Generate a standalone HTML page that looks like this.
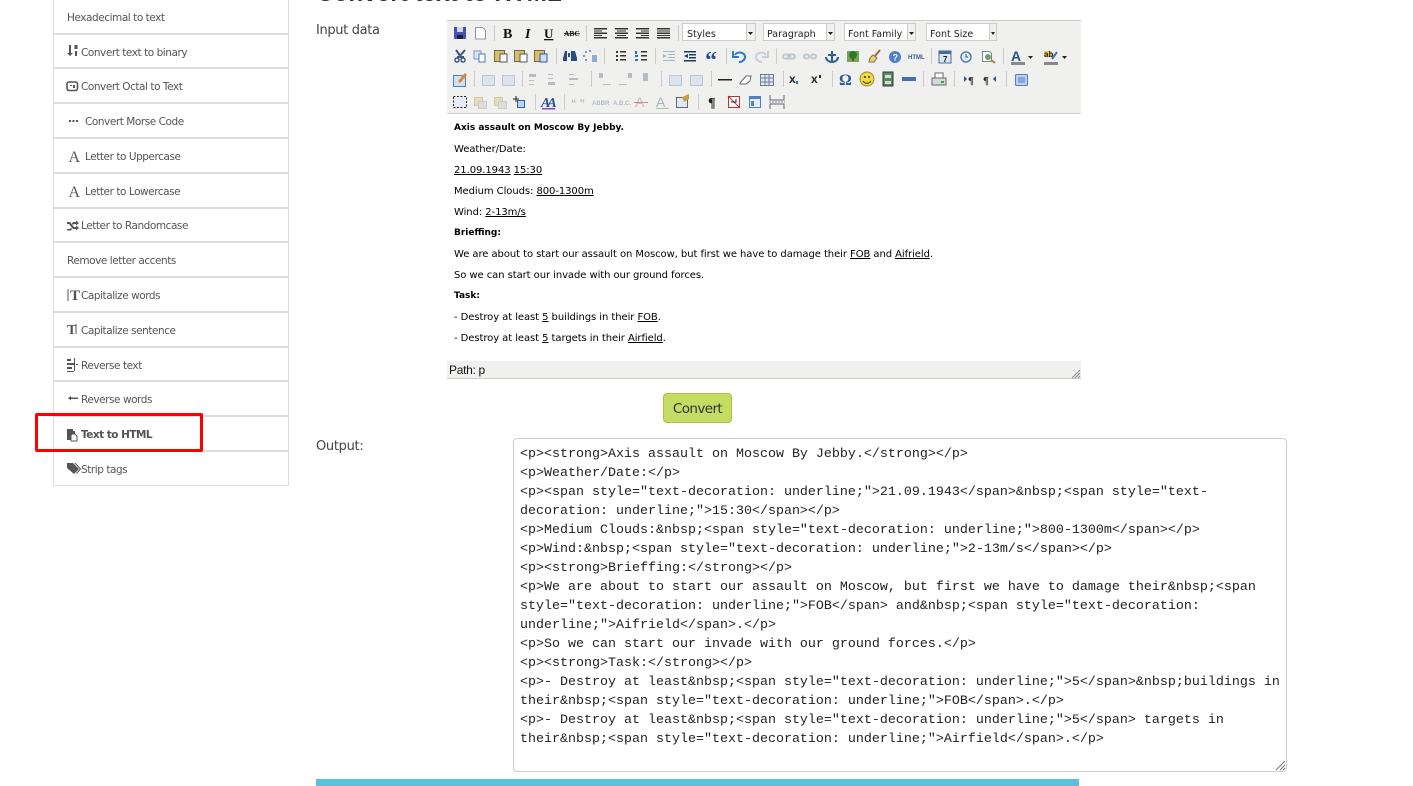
<!DOCTYPE html>
<html><head><meta charset="utf-8">
<style>
html,body{margin:0;padding:0;width:1413px;height:786px;overflow:hidden;background:#fff}
body{position:relative;font-family:"Liberation Sans",sans-serif}
.a{position:absolute;white-space:pre}
.box{position:absolute;left:53px;top:-2px;width:234px;height:487px;border:1px solid #ddd;border-top:0}
.sep{position:absolute;left:53px;width:236px;height:2px;background:#ddd}
.m{position:absolute;font:10.5px/14px "DejaVu Sans",sans-serif;color:#555;white-space:pre;letter-spacing:-.45px}
.e{position:absolute;left:454px;font:10px/14px "DejaVu Sans",sans-serif;color:#000;white-space:pre;letter-spacing:-.07px}
.e.b{font:bold 9px/14px "DejaVu Sans",sans-serif;letter-spacing:0}
.e u{text-underline-offset:1px}
.t{position:absolute;left:520px;font:13.33px/19px "Liberation Mono",monospace;color:#222;white-space:pre}
.ic{position:absolute}
</style></head><body>
<div class="a" style="left:316px;top:-21px;font-size:24.3px;line-height:30px;font-weight:bold;color:#333">Convert text to HTML</div>

<div class="box"></div>
<div class="sep" style="top:33px"></div><div class="sep" style="top:67px"></div><div class="sep" style="top:102px"></div><div class="sep" style="top:137px"></div><div class="sep" style="top:172px"></div><div class="sep" style="top:207px"></div><div class="sep" style="top:241px"></div><div class="sep" style="top:276px"></div><div class="sep" style="top:311px"></div><div class="sep" style="top:346px"></div><div class="sep" style="top:380px"></div><div class="sep" style="top:415px"></div><div class="sep" style="top:450px"></div>

<div class="m" style="left:67px;top:11px">Hexadecimal to text</div>
<div class="m" style="left:81px;top:46px">Convert text to binary</div>
<div class="m" style="left:81px;top:80px">Convert Octal to Text</div>
<div class="m" style="left:85px;top:115px">Convert Morse Code</div>
<div class="m" style="left:85px;top:150px">Letter to Uppercase</div>
<div class="m" style="left:85px;top:185px">Letter to Lowercase</div>
<div class="m" style="left:81px;top:219px">Letter to Randomcase</div>
<div class="m" style="left:67px;top:254px">Remove letter accents</div>
<div class="m" style="left:81px;top:289px">Capitalize words</div>
<div class="m" style="left:81px;top:324px">Capitalize sentence</div>
<div class="m" style="left:81px;top:359px">Reverse text</div>
<div class="m" style="left:81px;top:393px">Reverse words</div>
<div class="m" style="left:81px;top:428px;font-weight:bold;letter-spacing:-.52px">Text to HTML</div>
<div class="m" style="left:81px;top:463px">Strip tags</div>

<svg class="ic" style="left:60px;top:40px" width="30" height="440" viewBox="60 40 30 440" fill="#555">
<path d="M69 45h2v8h2l-3 3-3-3h2z"/><path d="M74.500 45h3v4h-3zM75 51h2v5h-2z"/>
<rect x="67" y="82" width="10.500" height="8.500" rx="2" fill="none" stroke="#555" stroke-width="1.600"/><path d="M70 85h2v1h-2zM73 85h2v3h-2z"/>
<path d="M69 120h2v2h-2zM72.500 120h2v2h-2zM76 120h2v2h-2z"/>
<text x="68.500" y="162" font-family="Liberation Serif" font-size="16">A</text>
<text x="68.500" y="197" font-family="Liberation Serif" font-size="16">A</text>
<path d="M67 222h3l4 5h2v-1.500l3 2.500-3 2.500V229h-3l-4-5h-2zM67 229h3l1-1.500 1 1.500-1 1.500h-4zM73 222h3v-1.500l3 2.500-3 2.500V224h-2l-1 1-1-1.500z"/>
<path d="M67.500 289h1v12h-1z"/><text x="70" y="300" font-family="Liberation Serif" font-weight="bold" font-size="15">T</text>
<text x="67" y="334" font-family="Liberation Serif" font-weight="bold" font-size="14">T</text><path d="M75.500 324h1v10h-1z"/>
<path d="M67 359h4v2h-4zM67 363h7v2h-7zM67 367h5v2h-5zM67 371h7v1h-7zM74 358h1v13h-1zM76 364h2v1h-2z"/>
<path d="M68 398l3-2v1.500h7v1.500h-7v1.500z"/>
<path d="M67 429h6v2h2v3h-4v6h-4z"/><path d="M72 434h3l2 2v5h-6v-6z" fill="#fff" stroke="#555"/>
<path d="M67 463h6l6 6-5 5-7-6z"/><path d="M75 463l5.500 6-4 4.500" fill="none" stroke="#555"/>
</svg>

<div class="a" style="left:35px;top:413px;width:162px;height:33px;border:3px solid #f00;border-radius:2px"></div>

<div class="a" style="left:316px;top:23px;font:13px/16px 'DejaVu Sans',sans-serif;color:#444;letter-spacing:-.35px">Input data</div>
<div class="a" style="left:316px;top:439px;font:13px/16px 'DejaVu Sans',sans-serif;color:#444;letter-spacing:-.3px">Output:</div>

<svg class="ic" style="left:447px;top:20px" width="634" height="94" viewBox="447 20 634 94" font-family="Liberation Sans">
<rect x="447" y="20" width="634" height="94" fill="#f0f0ee"/>
<rect x="447" y="20" width="634" height="1" fill="#ccc"/><rect x="447" y="113" width="634" height="1" fill="#ccc"/>
<g fill="#ccc">
<rect x="494" y="25" width="1" height="16"/><rect x="586" y="25" width="1" height="16"/><rect x="678" y="25" width="1" height="16"/>
<rect x="556" y="48" width="1" height="16"/><rect x="604" y="48" width="1" height="16"/><rect x="655" y="48" width="1" height="16"/><rect x="726" y="48" width="1" height="16"/><rect x="776" y="48" width="1" height="16"/><rect x="931" y="48" width="1" height="16"/><rect x="1003" y="48" width="1" height="16"/>
<rect x="474" y="71" width="1" height="16"/><rect x="522" y="71" width="1" height="16"/><rect x="591" y="71" width="1" height="16"/><rect x="661" y="71" width="1" height="16"/><rect x="711" y="71" width="1" height="16"/><rect x="783" y="71" width="1" height="16"/><rect x="832" y="71" width="1" height="16"/><rect x="923" y="71" width="1" height="16"/><rect x="954" y="71" width="1" height="16"/><rect x="1006" y="71" width="1" height="16"/>
<rect x="535" y="94" width="1" height="16"/><rect x="564" y="94" width="1" height="16"/><rect x="698" y="94" width="1" height="16"/>
</g>
<!-- row 1 -->
<rect x="454" y="27" width="12" height="12" fill="#3f55b5"/><rect x="457" y="27" width="6" height="5" fill="#cfd8f0"/><rect x="457" y="35" width="6" height="4" fill="#222"/>
<path d="M475.500 27.500h7l3 3v8.500h-10z" fill="#fff" stroke="#8a9ab0"/>
<g fill="#111" font-family="Liberation Serif" font-weight="bold">
<text x="503" y="38" font-size="14">B</text><text x="525" y="38" font-size="14" font-style="italic">I</text><text x="544" y="38" font-size="13" text-decoration="underline">U</text>
<text x="564" y="36" font-size="7.500" text-decoration="line-through">ABC</text></g>
<g fill="#333">
<path d="M594 28h13v1.500h-13zM594 30.500h8v1h-8zM594 32.500h13v1.500h-13zM594 35h8v1h-8zM594 37h13v1.500h-13z"/>
<path d="M615 28h13v1.500h-13zM617 30.500h9v1h-9zM615 32.500h13v1.500h-13zM617 35h9v1h-9zM615 37h13v1.500h-13z"/>
<path d="M636 28h13v1.500h-13zM641 30.500h8v1h-8zM636 32.500h13v1.500h-13zM641 35h8v1h-8zM636 37h13v1.500h-13z"/>
<path d="M657 28h13v1.500h-13zM657 30.500h13v1h-13zM657 32.500h13v1.500h-13zM657 35h13v1h-13zM657 37h13v1.500h-13z"/>
</g>
<g fill="#fff" stroke="#ccc"><rect x="682.500" y="23.500" width="73" height="17"/><rect x="763.500" y="23.500" width="71" height="17"/><rect x="844.500" y="23.500" width="71" height="17"/><rect x="926.500" y="23.500" width="70" height="17"/></g>
<g fill="#f0f0ee" stroke="#ccc"><rect x="746.500" y="23.500" width="9" height="17"/><rect x="826.500" y="23.500" width="8" height="17"/><rect x="907.500" y="23.500" width="8" height="17"/><rect x="989.500" y="23.500" width="7" height="17"/></g>
<g fill="#222"><path d="M748 32h5l-2.500 3zM828 32h5l-2.500 3zM909 32h5l-2.500 3zM991 32h4l-2 3z"/>
<g font-family="DejaVu Sans" font-size="9.500"><text x="687" y="37">Styles</text><text x="767" y="37">Paragraph</text><text x="848" y="37">Font Family</text><text x="930" y="37">Font Size</text></g></g>
<!-- row 2 -->
<path d="M456 50l5 7 3 0M465 50l-6 7-2 0" fill="none" stroke="#3c5a80" stroke-width="2"/><circle cx="457" cy="60" r="2" fill="none" stroke="#3c5a80" stroke-width="1.500"/><circle cx="463" cy="60" r="2" fill="none" stroke="#3c5a80" stroke-width="1.500"/>
<rect x="474" y="51" width="7" height="8" fill="#dce6f5" stroke="#7a95c0"/><rect x="479" y="54" width="6" height="8" fill="#fff" stroke="#4e78b8"/>
<g fill="#d9c070" stroke="#7a6a30"><rect x="494.500" y="50.500" width="10" height="11"/><rect x="514.500" y="50.500" width="10" height="11"/><rect x="534.500" y="50.500" width="10" height="11"/></g>
<rect x="500" y="54" width="7" height="8" fill="#fff" stroke="#556"/><rect x="520" y="54" width="7" height="8" fill="#fff" stroke="#556"/><rect x="540" y="54" width="7" height="8" fill="#cfe0f8" stroke="#35a"/>
<path d="M563 58l2-7h2v10h-4zM571 51h2v10h-2zM568 53h2v4h-2zM573 51h2l2 7v3h-4z" fill="#2a4a80"/>
<g fill="#4f7fc0"><circle cx="586" cy="52" r="1"/><circle cx="584" cy="56" r="1"/><circle cx="586" cy="60" r="1"/><circle cx="590" cy="51" r="1"/><path d="M592 55h5v7h-5z" opacity=".6"/></g>
<g fill="#333"><path d="M616 51h2v2h-2zM616 55h2v2h-2zM616 59h2v2h-2zM620 51h6v1.500h-6zM620 55h6v1.500h-6zM620 59h6v1.500h-6z"/>
<path d="M641 51h6v1.500h-6zM641 55h6v1.500h-6zM641 59h6v1.500h-6z"/></g><path d="M635 51h2v3h-2zM635 55h3v2h-3zM635 59h3v2h-3z" fill="#2f6fc0"/>
<g fill="#a8b4c0"><path d="M663 51h12v1h-12zM668 54h7v1h-7zM668 57h7v1h-7zM663 60h12v1h-12zM667 56l-4-2v4z"/></g><g fill="#1a3a6a"><path d="M684 51h12v1.500h-12zM689 54h7v1.500h-7zM689 57h7v1.500h-7zM684 60h12v1.500h-12zM684 56l4-2v4z"/></g>
<text x="705" y="68" font-family="Liberation Serif" font-size="24" font-weight="bold" fill="#2a4f90">“</text>
<path d="M735 55c2-4 10-3 10 2 0 3-3 5-6 5M733 51v6h6" fill="none" stroke="#2f78c8" stroke-width="2"/>
<path d="M766 55c-2-4-10-3-10 2 0 3 3 5 6 5M768 51v6h-6" fill="none" stroke="#c5d0dc" stroke-width="2"/>
<g fill="none" stroke="#bfc8d0" stroke-width="2"><rect x="783" y="54.500" width="7" height="4" rx="2"/><rect x="788" y="54.500" width="7" height="4" rx="2"/><rect x="804" y="54.500" width="5" height="4" rx="2"/><rect x="811" y="54.500" width="5" height="4" rx="2"/></g>
<path d="M832 51v10M828 55h8M826 57c0 3 3 5 6 5s6-2 6-5" fill="none" stroke="#2f5f90" stroke-width="2"/>
<rect x="847" y="51" width="12" height="11" fill="#70a850"/><circle cx="853" cy="55" r="4" fill="#2a7a2a"/><rect x="852" y="57" width="2" height="4" fill="#7a4a20"/>
<path d="M880 50l-5 6" stroke="#887040" stroke-width="2"/><path d="M870 58l3-3 4 3-3 4h-5z" fill="#e6d080" stroke="#887040"/>
<circle cx="895" cy="57" r="6" fill="#4f7fc8"/><text x="892.500" y="60.500" font-size="9" font-weight="bold" fill="#fff">?</text>
<text x="908" y="59" font-size="6" font-weight="bold" fill="#3a5a90">HTML</text>
<rect x="939" y="51" width="12" height="12" fill="#dbe6f4" stroke="#4a6a9a"/><rect x="939" y="51" width="12" height="3" fill="#4a6a9a"/><text x="943" y="62" font-size="8" font-weight="bold" fill="#222">7</text>
<circle cx="966" cy="57" r="5" fill="#e4ecf6" stroke="#5a80b0" stroke-width="1.500"/><path d="M966 54v3h2" fill="none" stroke="#34507a"/>
<path d="M982.500 51.500h7l2 2v8h-9z" fill="#fff" stroke="#7a8a9a"/><circle cx="988" cy="57" r="3" fill="#70a060"/><path d="M991 60l4 3" stroke="#b08040" stroke-width="2"/>
<text x="1011" y="61" font-size="14" font-weight="bold" fill="#2a4f90">A</text><rect x="1011" y="62" width="14" height="3" fill="#888"/><path d="M1028 56h5l-2.500 3z" fill="#222"/>
<rect x="1044" y="51" width="8" height="6" fill="#e8d040"/><text x="1044" y="57" font-size="8" font-weight="bold" fill="#223">ab</text><path d="M1052 59l5-7" stroke="#3a70c0" stroke-width="2"/><rect x="1044" y="62" width="14" height="3" fill="#888"/><path d="M1062 56h5l-2.500 3z" fill="#222"/>
<!-- row 3 -->
<rect x="453.500" y="75.500" width="12" height="11" fill="#cfe0f4" stroke="#4f7fc0"/><path d="M458 81l7-8 2 2-7 8z" fill="#d88830"/>
<g fill="#dbe3ec" stroke="#b8c6d6"><rect x="482.500" y="75.500" width="12" height="10"/><rect x="502.500" y="75.500" width="12" height="10"/><rect x="669.500" y="75.500" width="12" height="10"/><rect x="690.500" y="75.500" width="12" height="10"/></g>
<g fill="#b4bcc6"><path d="M529 74h7v3h-7zM529 80h5v1h-5zM529 84h5v1h-5zM548 82h7v3h-7zM548 74h5v1h-5zM548 78h5v1h-5zM569 78h9v2h-9zM569 74h5v1h-5zM569 84h5v1h-5zM599 73h4v5h-4zM603 84h8v1h-8zM619 84h8v1h-8zM628 73h4v5h-4zM643 73h5v8h-5z"/></g>
<rect x="718" y="79" width="14" height="1.500" fill="#222"/>
<path d="M740 83l6-7h5l-1 5-4 3h-6z" fill="#fff" stroke="#667"/>
<rect x="760.500" y="74.500" width="13" height="11" fill="#dfe8f2" stroke="#6a7f99"/><path d="M760 78h14M760 82h14M765 74v12M769 74v12" stroke="#6a7f99"/>
<text x="789" y="83" font-size="12" font-weight="bold" fill="#222">x</text><rect x="796" y="81" width="2" height="3" fill="#2f6fc0"/>
<text x="811" y="83" font-size="12" font-weight="bold" fill="#222">x</text><rect x="819" y="75" width="2" height="3" fill="#222"/>
<text x="839" y="85" font-family="Liberation Serif" font-size="16" font-weight="bold" fill="#2a5a9a">Ω</text>
<circle cx="867" cy="79" r="7" fill="#f2d840" stroke="#a08820"/><circle cx="865" cy="77" r="1" fill="#333"/><circle cx="869" cy="77" r="1" fill="#333"/><path d="M863 81c2 3 6 3 8 0" fill="none" stroke="#333"/>
<rect x="883" y="72" width="10" height="14" fill="#5a8a60" stroke="#334"/><rect x="885" y="75" width="6" height="3" fill="#cfe0c8"/><rect x="885" y="81" width="6" height="3" fill="#cfe0c8"/>
<rect x="902" y="77" width="14" height="4" fill="#3f70b8"/>
<rect x="932" y="78" width="14" height="7" fill="#d4d8dc" stroke="#667"/><rect x="935" y="73" width="8" height="5" fill="#fff" stroke="#667"/><rect x="941" y="81" width="3" height="2" fill="#3a3"/>
<path d="M964 76l3 3-3 3z" fill="#2a4f90"/><text x="968" y="84" font-family="Liberation Serif" font-size="11" font-weight="bold" fill="#333">¶</text>
<text x="983" y="84" font-family="Liberation Serif" font-size="11" font-weight="bold" fill="#333">¶</text><path d="M996 76l-3 3 3 3z" fill="#2a4f90"/>
<rect x="1015.500" y="74.500" width="12" height="11" rx="1" fill="#bcd0ec" stroke="#4f7fc0"/><path d="M1018 78h7M1018 80h7M1018 82h7" stroke="#4f7fc0"/>
<!-- row 4 -->
<rect x="453.500" y="96.500" width="13" height="11" fill="#e4eef8" stroke="#222" stroke-dasharray="2 1.500"/>
<g fill="#e8dcb0" stroke="#cfc9b4"><rect x="474.500" y="97.500" width="8" height="8"/><rect x="494.500" y="97.500" width="8" height="8"/></g>
<g fill="#ddd" stroke="#ccc"><rect x="478.500" y="101.500" width="8" height="7"/><rect x="498.500" y="101.500" width="8" height="7"/></g>
<rect x="517.500" y="100.500" width="7" height="7" fill="#bfd4ee" stroke="#335f99"/><path d="M516 96v6M513 99h6" stroke="#222"/>
<text x="541" y="107" font-family="Liberation Serif" font-size="14" font-style="italic" font-weight="bold" fill="#2a4f90" letter-spacing="-3">AA</text><rect x="542" y="108" width="13" height="1.500" fill="#7a4fb0"/>
<g fill="#b4bcc8" font-weight="bold" font-size="6"><text x="571" y="107" font-size="11">“ ”</text><text x="592" y="105">ABBR</text><text x="613" y="105">A.B.C.</text></g>
<text x="635" y="107" font-size="14" fill="#bfc4cc">A</text><rect x="634" y="102" width="14" height="1" fill="#e08080"/>
<text x="656" y="107" font-size="14" fill="#aab0bc">A</text><rect x="656" y="108" width="13" height="1" fill="#9c9"/>
<rect x="676.500" y="97.500" width="11" height="10" fill="#dfe8f4" stroke="#667"/><path d="M682 97l7-3v5l-5 3z" fill="#c8a040"/>
<text x="708" y="107" font-family="Liberation Serif" font-size="14" font-weight="bold" fill="#222">¶</text>
<rect x="728.500" y="96.500" width="11" height="11" fill="#fff" stroke="#c03030"/><path d="M728 96l12 12" stroke="#c03030"/><path d="M731 102h5v-3" fill="none" stroke="#222"/>
<rect x="749.500" y="96.500" width="11" height="11" fill="#e4eef8" stroke="#4f7fc0"/><rect x="750" y="97" width="10" height="2" fill="#4f7fc0"/><rect x="751" y="101" width="3" height="5" fill="#4f7fc0"/>
<path d="M770 95v5h14v-5M770 109v-5h14v5" fill="none" stroke="#667"/><path d="M769 102h16" stroke="#88a" stroke-dasharray="2 1"/>
</svg>

<div class="e b" style="top:121px">Axis assault on Moscow By Jebby.</div>
<div class="e" style="top:143px">Weather/Date:</div>
<div class="e" style="top:164px"><u>21.09.1943</u> <u>15:30</u></div>
<div class="e" style="top:185px">Medium Clouds: <u>800-1300m</u></div>
<div class="e" style="top:206px">Wind: <u>2-13m/s</u></div>
<div class="e b" style="top:226px">Brieffing:</div>
<div class="e" style="top:248px">We are about to start our assault on Moscow, but first we have to damage their <u>FOB</u> and <u>Aifrield</u>.</div>
<div class="e" style="top:269px">So we can start our invade with our ground forces.</div>
<div class="e b" style="top:289px">Task:</div>
<div class="e" style="top:311px">- Destroy at least <u>5</u> buildings in their <u>FOB</u>.</div>
<div class="e" style="top:332px">- Destroy at least <u>5</u> targets in their <u>Airfield</u>.</div>

<div class="a" style="left:447px;top:361px;width:634px;height:17px;background:#f0f0ee;border-bottom:1px solid #ccc"></div>
<div class="a" style="left:449px;top:362px;font-size:12px;line-height:16px;color:#111;letter-spacing:-.3px">Path: p</div>
<svg class="ic" style="left:1071px;top:369px" width="10" height="10" stroke="#888"><path d="M1 9L9 1M4 9L9 4M7 9L9 7"/></svg>

<div class="a" style="left:663px;top:393px;width:67px;height:28px;background:#c5dc62;border:1px solid #a9c24a;border-radius:4px;font:13.5px/31px 'DejaVu Sans',sans-serif;color:#333;text-align:center;letter-spacing:-.6px">Convert</div>

<div class="a" style="left:513px;top:438px;width:772px;height:332px;border:1px solid #ccc;border-radius:4px"></div>
<svg class="ic" style="left:1275px;top:760px" width="11" height="11" stroke="#777"><path d="M1 10L10 1M5 10L10 5M8 10L10 8"/></svg>
<div class="t" style="top:444.500px">&lt;p&gt;&lt;strong&gt;Axis assault on Moscow By Jebby.&lt;/strong&gt;&lt;/p&gt;
&lt;p&gt;Weather/Date:&lt;/p&gt;
&lt;p&gt;&lt;span style="text-decoration: underline;"&gt;21.09.1943&lt;/span&gt;&amp;nbsp;&lt;span style="text-
decoration: underline;"&gt;15:30&lt;/span&gt;&lt;/p&gt;
&lt;p&gt;Medium Clouds:&amp;nbsp;&lt;span style="text-decoration: underline;"&gt;800-1300m&lt;/span&gt;&lt;/p&gt;
&lt;p&gt;Wind:&amp;nbsp;&lt;span style="text-decoration: underline;"&gt;2-13m/s&lt;/span&gt;&lt;/p&gt;
&lt;p&gt;&lt;strong&gt;Brieffing:&lt;/strong&gt;&lt;/p&gt;
&lt;p&gt;We are about to start our assault on Moscow, but first we have to damage their&amp;nbsp;&lt;span
style="text-decoration: underline;"&gt;FOB&lt;/span&gt; and&amp;nbsp;&lt;span style="text-decoration:
underline;"&gt;Aifrield&lt;/span&gt;.&lt;/p&gt;
&lt;p&gt;So we can start our invade with our ground forces.&lt;/p&gt;
&lt;p&gt;&lt;strong&gt;Task:&lt;/strong&gt;&lt;/p&gt;
&lt;p&gt;- Destroy at least&amp;nbsp;&lt;span style="text-decoration: underline;"&gt;5&lt;/span&gt;&amp;nbsp;buildings in
their&amp;nbsp;&lt;span style="text-decoration: underline;"&gt;FOB&lt;/span&gt;.&lt;/p&gt;
&lt;p&gt;- Destroy at least&amp;nbsp;&lt;span style="text-decoration: underline;"&gt;5&lt;/span&gt; targets in
their&amp;nbsp;&lt;span style="text-decoration: underline;"&gt;Airfield&lt;/span&gt;.&lt;/p&gt;</div>

<div class="a" style="left:316px;top:779px;width:763px;height:7px;background:#5bc0de"></div>
</body></html>
